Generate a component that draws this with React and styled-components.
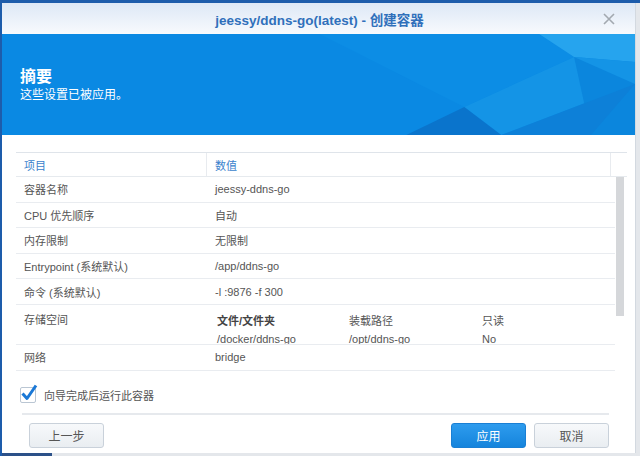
import React from 'react'
import styled, { createGlobalStyle } from 'styled-components'

const GlobalStyle = createGlobalStyle`
  html, body { margin: 0; padding: 0; }
  body {
    font-family: "Liberation Sans", "Noto Sans CJK SC", sans-serif;
    color: #555;
  }
`

const rows = [
    { name: '容器名称', value: 'jeessy-ddns-go' },
    { name: 'CPU 优先顺序', value: '自动' },
    { name: '内存限制', value: '无限制' },
    { name: 'Entrypoint (系统默认)', value: '/app/ddns-go' },
    { name: '命令 (系统默认)', value: '-l :9876 -f 300' },
]

const volumes = [
    { file: '/docker/ddns-go', mount: '/opt/ddns-go', ro: 'No' },
]

export default function App() {
    return (
        <Desk>
            <GlobalStyle />
            <Window>
                <TitleBar>
                    <span />
                    <Title>jeessy/ddns-go(latest) - 创建容器</Title>
                    <Close>
                        <svg width="12" height="12" viewBox="0 0 12 12">
                            <path d="M1 1 L11 11 M11 1 L1 11" stroke="#a3a9b0" strokeWidth="1.6" />
                        </svg>
                    </Close>
                </TitleBar>

                <Banner>
                    <BannerArt viewBox="0 0 634 101" preserveAspectRatio="none">
                        <polygon points="318,0 463,73 573,23 538,0" fill="#0c8de5" />
                        <polygon points="538,0 634,0 634,28 573,23" fill="#26a4ee" />
                        <polygon points="463,73 573,23 634,28 634,50 500,101" fill="#1494e6" />
                        <polygon points="573,23 634,50 634,101 590,101" fill="#0b86dd" />
                        <polygon points="405,101 463,73 500,101" fill="#0a74cc" />
                        <polygon points="500,101 634,50 590,101" fill="#0d80d8" />
                    </BannerArt>
                    <BannerTitle>摘要</BannerTitle>
                    <BannerText>这些设置已被应用。</BannerText>
                </Banner>

                <Body>
                    <Grid>
                        <HeadRow>
                            <HeadCell $w={191} $divider>项目</HeadCell>
                            <HeadCell $w={404} $divider>数值</HeadCell>
                            <HeadCell $w={16} />
                        </HeadRow>
                        <ScrollArea>
                            <RowList>
                                {rows.map(r => (
                                    <Row key={r.name}>
                                        <NameCell>{r.name}</NameCell>
                                        <ValueCell>{r.value}</ValueCell>
                                    </Row>
                                ))}
                                <Row $tall>
                                    <NameCell $top>存储空间</NameCell>
                                    <SubTable>
                                        <SubRow>
                                            <SubHead>文件/文件夹</SubHead>
                                            <SubCell>装载路径</SubCell>
                                            <SubCell>只读</SubCell>
                                        </SubRow>
                                        {volumes.map(v => (
                                            <SubRow key={v.file}>
                                                <SubCell>{v.file}</SubCell>
                                                <SubCell>{v.mount}</SubCell>
                                                <SubCell>{v.ro}</SubCell>
                                            </SubRow>
                                        ))}
                                    </SubTable>
                                </Row>
                                <Row>
                                    <NameCell>网络</NameCell>
                                    <ValueCell>bridge</ValueCell>
                                </Row>
                            </RowList>
                            <Track>
                                <Thumb />
                            </Track>
                        </ScrollArea>
                    </Grid>

                    <CheckLine>
                        <CheckBox>
                            <svg width="20" height="20" viewBox="0 0 20 20">
                                <path d="M3.5 10.5 L8 15.5 L17 2.5" fill="none" stroke="#1a78d6" strokeWidth="3" strokeLinejoin="round" />
                            </svg>
                        </CheckBox>
                        <span>向导完成后运行此容器</span>
                    </CheckLine>

                    <Footer>
                        <Button>上一步</Button>
                        <Spacer />
                        <Button $primary>应用</Button>
                        <Button>取消</Button>
                    </Footer>
                </Body>
            </Window>
        </Desk>
    )
}

const Desk = styled.div`
    width: 640px;
    height: 456px;
    box-sizing: border-box;
    overflow: hidden;
    background: linear-gradient(to right, #2c5189 0 50px, #e4e7eb 50px);
    border-top: 3px solid #1d5cab;
    border-left: 2px solid #1d5cab;
`

const Window = styled.div`
    width: 634px;
    height: 450px;
    box-sizing: border-box;
    display: flex;
    flex-direction: column;
    background: #fff;
    border-right: 1px solid #d3d9e0;
`

const TitleBar = styled.div`
    height: 31px;
    flex: none;
    display: grid;
    grid-template-columns: 1fr auto 1fr;
    align-items: center;
    background: linear-gradient(#dde8f6, #f8fafd);
`

const Title = styled.div`
    font-size: 13.5px;
    font-weight: bold;
    color: #3070bb;
    padding-left: 2px;
`

const Close = styled.div`
    justify-self: end;
    display: flex;
    margin-right: 20px;
`

const Banner = styled.div`
    position: relative;
    height: 101px;
    flex: none;
    box-sizing: border-box;
    padding: 33px 18px 0;
    background: #0a89e3;
    color: #fff;
    overflow: hidden;
`

const BannerArt = styled.svg`
    position: absolute;
    inset: 0;
    width: 100%;
    height: 100%;
`

const BannerTitle = styled.div`
    position: relative;
    font-size: 16px;
    font-weight: bold;
    line-height: 20px;
`

const BannerText = styled.div`
    position: relative;
    font-size: 12px;
    line-height: 17px;
`

const Body = styled.div`
    flex: 1;
    display: flex;
    flex-direction: column;
    padding: 17px 8px 0 14px;
`

const Grid = styled.div`
    width: 611px;
    font-size: 11px;
`

const HeadRow = styled.div`
    display: flex;
    height: 25px;
    box-sizing: border-box;
    border-top: 1px solid #dfe4ea;
    border-bottom: 1px solid #e6eaee;
`

const HeadCell = styled.div`
    width: ${p => p.$w}px;
    box-sizing: border-box;
    padding-left: 8px;
    display: flex;
    align-items: center;
    color: #3b7fcc;
    border-right: ${p => (p.$divider ? '1px solid #e8ebef' : 'none')};
`

const ScrollArea = styled.div`
    display: flex;
    height: 195px;
    overflow: hidden;
`

const RowList = styled.div`
    width: 600px;
`

const Row = styled.div`
    display: flex;
    height: ${p => (p.$tall ? '40px' : '25.6px')};
    box-sizing: border-box;
    border-bottom: 1px solid #e9ecf0;
    overflow: hidden;
`

const NameCell = styled.div`
    width: 191px;
    flex: none;
    padding: ${p => (p.$top ? '6px 8px 0' : '0 8px')};
    box-sizing: border-box;
    display: flex;
    align-items: ${p => (p.$top ? 'flex-start' : 'center')};
`

const ValueCell = styled.div`
    flex: 1;
    padding: 0 8px;
    display: flex;
    align-items: center;
`

const SubTable = styled.div`
    flex: 1;
    padding: 6px 0 0 10px;
`

const SubRow = styled.div`
    display: grid;
    grid-template-columns: 132px 133px 1fr;
    height: 19px;
    align-items: center;
`

const SubCell = styled.div`
    white-space: nowrap;
`

const SubHead = styled.div`
    font-weight: bold;
    color: #444;
`

const Track = styled.div`
    width: 11px;
    padding-left: 1px;
`

const Thumb = styled.div`
    width: 8px;
    height: 139px;
    background: #d5d7da;
`

const CheckLine = styled.div`
    display: flex;
    align-items: center;
    gap: 8px;
    margin: 15px 0 0 4px;
    font-size: 11px;
    color: #555;
`

const CheckBox = styled.div`
    position: relative;
    width: 14px;
    height: 14px;
    border: 1px solid #bac6d3;
    border-radius: 2px;
    background: #fff;

    svg {
        position: absolute;
        left: -2px;
        top: -5px;
    }
`

const Footer = styled.div`
    display: flex;
    align-items: center;
    gap: 8px;
    margin: 10px 18px 0 6px;
    padding: 8px 0 0 7px;
    border-top: 2px solid #e6e9ed;
`

const Spacer = styled.div`
    flex: 1;
`

const Button = styled.button`
    width: 75px;
    height: 25px;
    box-sizing: border-box;
    border-radius: 3px;
    font-family: inherit;
    font-size: 12px;
    border: 1px solid ${p => (p.$primary ? '#1a7fd4' : '#c9d1da')};
    color: ${p => (p.$primary ? '#fff' : '#555')};
    background: ${p =>
        p.$primary
            ? 'linear-gradient(#2e9cee, #1584dc)'
            : 'linear-gradient(#f7f9fb, #e9edf1)'};
`
